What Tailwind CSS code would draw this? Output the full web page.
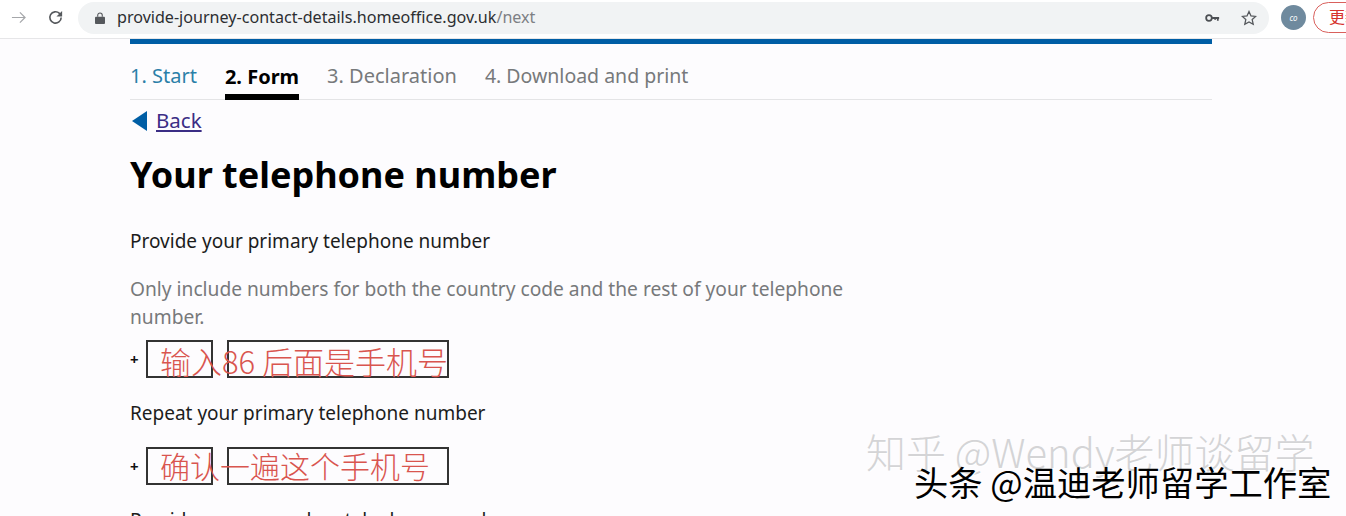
<!DOCTYPE html>
<html lang="en">
<head>
    <meta charset="UTF-8">
    <title>Your telephone number</title>
    <script src="https://cdn.jsdelivr.net/npm/@tailwindcss/browser@4"></script>
</head>
<body class="relative w-[1346px] h-[516px] overflow-hidden bg-[#fdfcfe] text-[#111] font-['Noto_Sans','Noto_Sans_CJK_SC',sans-serif]">

    <!-- Browser toolbar -->
    <div class="h-[39px] pb-[3px] flex items-center bg-white border-b border-[#e6e6e8] overflow-hidden">
        <svg class="ml-[11px] w-[15px] h-[15px] shrink-0 text-[#a5a7aa]" viewBox="0 0 16 16" fill="none" stroke="currentColor" stroke-width="1.300"><path d="M1 8h14M9.500 2.500 15 8l-5.500 5.500"/></svg>
        <svg class="ml-[21px] w-[17px] h-[17px] shrink-0 text-[#55585c]" viewBox="0 0 18 18" fill="none" stroke="currentColor" stroke-width="1.700"><path d="M15 9a6 6 0 1 1-1.800-4.300L15 6.500"/><path d="M16 2v6h-6" fill="currentColor" stroke="none"/></svg>
        <div class="ml-[14px] w-[1191px] h-[32px] shrink-0 flex items-center bg-[#f1f3f4] rounded-full">
            <svg class="ml-[17px] w-[10px] h-[12px] shrink-0 text-[#55585c]" viewBox="0 0 11 13" fill="currentColor"><path d="M1 5h9a1 1 0 0 1 1 1v6a1 1 0 0 1-1 1H1a1 1 0 0 1-1-1V6a1 1 0 0 1 1-1Z"/><path d="M3 5V3.500a2.500 2.500 0 0 1 5 0V5" fill="none" stroke="currentColor" stroke-width="1.200"/></svg>
            <span class="ml-[12px] text-[16.100px] text-[#2c2e31] whitespace-nowrap">provide-journey-contact-details.homeoffice.gov.uk<span class="text-[#7d8084]">/next</span></span>
            <svg class="ml-auto w-[15px] h-[10px] shrink-0 text-[#4c4f53]" viewBox="0 0 17 10" fill="none" stroke="currentColor"><circle cx="4.500" cy="5" r="3.200" stroke-width="2"/><path d="M8 5h8M14.500 5v3M11.500 5v2" stroke-width="2"/></svg>
            <svg class="ml-[21px] mr-[12px] w-[16px] h-[16px] shrink-0 text-[#55585c]" viewBox="0 0 16 16" fill="none" stroke="currentColor" stroke-width="1.300"><path d="m8 1.500 2 4.400 4.700.5-3.500 3.200 1 4.700L8 11.900l-4.200 2.400 1-4.700L1.300 6.400 6 5.900Z"/></svg>
        </div>
        <div class="ml-[12px] w-[25px] h-[25px] shrink-0 rounded-full bg-[#6f8a9e] flex items-center justify-center text-[8px] italic text-white">co</div>
        <div class="ml-[7px] w-[60px] h-[31px] shrink-0 rounded-full border-[1.500px] border-[#d9605c] pl-[15px] text-[16px] leading-[28px] text-[#d6322c] whitespace-nowrap">更新</div>
    </div>

    <!-- Page -->
    <main class="w-[1082px] ml-[130px]">
        <div class="h-[5px] bg-[#005ea5]"></div>

        <nav class="h-[56px] flex items-end gap-[28px] border-b border-[#e4e4e6] text-[20px]">
            <span class="h-[38px] text-[#2b7fa8]">1. Start</span>
            <span class="h-[38px] border-b-[6px] border-black font-bold text-black -mb-px">2. Form</span>
            <span class="h-[38px] text-[#77797b]">3. Declaration</span>
            <span class="h-[38px] text-[19.500px] leading-[30px] text-[#77797b]">4. Download and print</span>
        </nav>

        <div class="h-[41px] flex items-center gap-[9px] text-[20.500px]">
            <span class="w-0 h-0 ml-[2px] border-y-[10px] border-y-transparent border-r-[15px] border-r-[#005ea5]"></span>
            <a href="#" class="underline text-[#3b2d85]">Back</a>
        </div>

        <h1 class="mt-[9px] text-[36px] leading-[50px] font-bold text-black">Your telephone number</h1>

        <p class="mt-[28px] text-[19px] leading-[26px] text-[#1c1c1c]">Provide your primary telephone number</p>

        <p class="mt-[21px] w-[730px] text-[19.200px] leading-[28px] text-[#77797b]">Only include numbers for both the country code and the rest of your telephone number.</p>

        <div class="mt-[9px] flex items-center">
            <span class="w-[16px] text-[15px] font-bold">+</span>
            <div class="w-[67px] h-[38px] border-2 border-[#333]"></div>
            <div class="ml-[14px] w-[222px] h-[38px] border-2 border-[#333]"></div>
        </div>

        <p class="mt-[22px] text-[19px] leading-[26px] text-[#1c1c1c]">Repeat your primary telephone number</p>

        <div class="mt-[21px] flex items-center">
            <span class="w-[16px] text-[15px] font-bold">+</span>
            <div class="w-[67px] h-[38px] border-2 border-[#333]"></div>
            <div class="ml-[14px] w-[222px] h-[38px] border-2 border-[#333]"></div>
        </div>

        <p class="mt-[22px] text-[19px] leading-[26px] text-[#1c1c1c]">Provide your secondary telephone number</p>
    </main>

    <!-- Red handwritten notes on top of the inputs -->
    <div class="absolute left-[160px] top-[341px] text-[31px] leading-[40px] text-[#d9554f] whitespace-nowrap font-['Noto_Sans_CJK_SC',sans-serif] font-light">输入86 后面是手机号</div>
    <div class="absolute left-[160px] top-[445px] text-[30px] leading-[40px] text-[#d9554f] whitespace-nowrap font-['Noto_Sans_CJK_SC',sans-serif] font-light">确认一遍这个手机号</div>

    <!-- Watermarks -->
    <div class="absolute left-[866px] top-[426px] text-[40px] leading-[50px] text-[#d4d4d6] whitespace-nowrap font-['Noto_Sans_CJK_SC',sans-serif] font-light [text-shadow:1px_1px_0_#fff]">知乎 @Wendy老师谈留学</div>
    <div class="absolute left-[914px] top-[459px] text-[34.300px] leading-[44px] text-black whitespace-nowrap font-['Noto_Sans_CJK_SC',sans-serif] [text-shadow:1px_1px_0_#fff]">头条 @温迪老师留学工作室</div>

</body>
</html>
